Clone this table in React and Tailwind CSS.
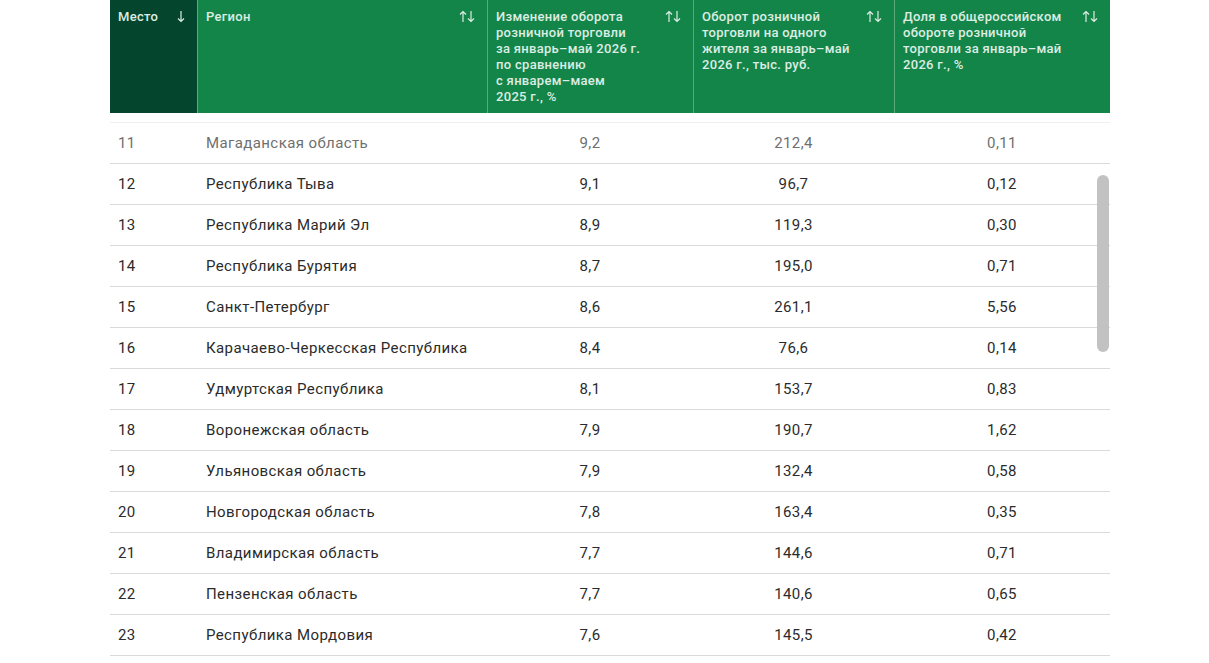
import React from 'react';

const rows = [
  ['11', 'Магаданская область', '9,2', '212,4', '0,11'],
  ['12', 'Республика Тыва', '9,1', '96,7', '0,12'],
  ['13', 'Республика Марий Эл', '8,9', '119,3', '0,30'],
  ['14', 'Республика Бурятия', '8,7', '195,0', '0,71'],
  ['15', 'Санкт-Петербург', '8,6', '261,1', '5,56'],
  ['16', 'Карачаево-Черкесская Республика', '8,4', '76,6', '0,14'],
  ['17', 'Удмуртская Республика', '8,1', '153,7', '0,83'],
  ['18', 'Воронежская область', '7,9', '190,7', '1,62'],
  ['19', 'Ульяновская область', '7,9', '132,4', '0,58'],
  ['20', 'Новгородская область', '7,8', '163,4', '0,35'],
  ['21', 'Владимирская область', '7,7', '144,6', '0,71'],
  ['22', 'Пензенская область', '7,7', '140,6', '0,65'],
  ['23', 'Республика Мордовия', '7,6', '145,5', '0,42'],
];

function SortBoth() {
  return (
    <svg width="16" height="13" viewBox="0 0 16 13" fill="none" stroke="currentColor" strokeWidth="1.2" className="shrink-0 mt-[1px]">
      <path d="M4 12V1.5M1 4.5L4 1.5L7 4.5" />
      <path d="M12 1V11.5M9 8.5L12 11.5L15 8.5" />
    </svg>
  );
}

function SortDown() {
  return (
    <svg width="8" height="13" viewBox="0 0 8 13" fill="none" stroke="currentColor" strokeWidth="1.2" className="shrink-0 mt-[1px]">
      <path d="M4 1V11.5M1 8.5L4 11.5L7 8.5" />
    </svg>
  );
}

const cols = 'grid grid-cols-[87px_290px_206px_201px_216px]';

export default function App() {
  return (
    <div className="w-[1209px] h-[663px] bg-white overflow-hidden" style={{ fontFamily: 'Roboto, "Noto Sans", sans-serif' }}>
      <div className="relative w-[1000px] ml-[110px]">
        {/* header */}
        <div className={`${cols} h-[113px] text-[13px] leading-4 font-medium tracking-[0.3px] text-[#dcede3]`}>
          <div className="bg-[#03452d] flex justify-between pl-2 pr-3 pt-[9px]">
            <span>Место</span>
            <SortDown />
          </div>
          <div className="bg-[#148549] border-l border-[#5aa97a] flex justify-between pl-2 pr-3 pt-[9px]">
            <span>Регион</span>
            <SortBoth />
          </div>
          <div className="bg-[#148549] border-l border-[#5aa97a] flex justify-between pl-2 pr-3 pt-[9px]">
            <span>
              Изменение оборота<br />розничной торговли<br />за январь–май 2026 г.<br />по сравнению<br />с январем–маем<br />2025 г., %
            </span>
            <SortBoth />
          </div>
          <div className="bg-[#148549] border-l border-[#5aa97a] flex justify-between pl-2 pr-3 pt-[9px]">
            <span>
              Оборот розничной<br />торговли на одного<br />жителя за январь–май<br />2026 г., тыс. руб.
            </span>
            <SortBoth />
          </div>
          <div className="bg-[#148549] border-l border-[#5aa97a] flex justify-between pl-2 pr-3 pt-[9px]">
            <span>
              Доля в общероссийском<br />обороте розничной<br />торговли за январь–май<br />2026 г., %
            </span>
            <SortBoth />
          </div>
        </div>

        {/* body */}
        <div className="mt-[9px] border-t border-[#f0f0f0]">
          {rows.map((r, i) => (
            <div
              key={r[0]}
              className={`${cols} h-[41px] items-center border-b border-[#dadada] text-[15px] tracking-[0.4px] ${i === 0 ? 'text-[#6f6f6f]' : 'text-[#2b2b2b]'}`}
            >
              <div className="pl-2">{r[0]}</div>
              <div className="pl-[9px]">{r[1]}</div>
              <div className="text-center">{r[2]}</div>
              <div className="text-center">{r[3]}</div>
              <div className="text-center">{r[4]}</div>
            </div>
          ))}
        </div>

        {/* scrollbar thumb */}
        <div className="absolute left-[987px] top-[175px] w-[12px] h-[177px] rounded-full bg-[#c2c2c2]" />
      </div>
    </div>
  );
}
